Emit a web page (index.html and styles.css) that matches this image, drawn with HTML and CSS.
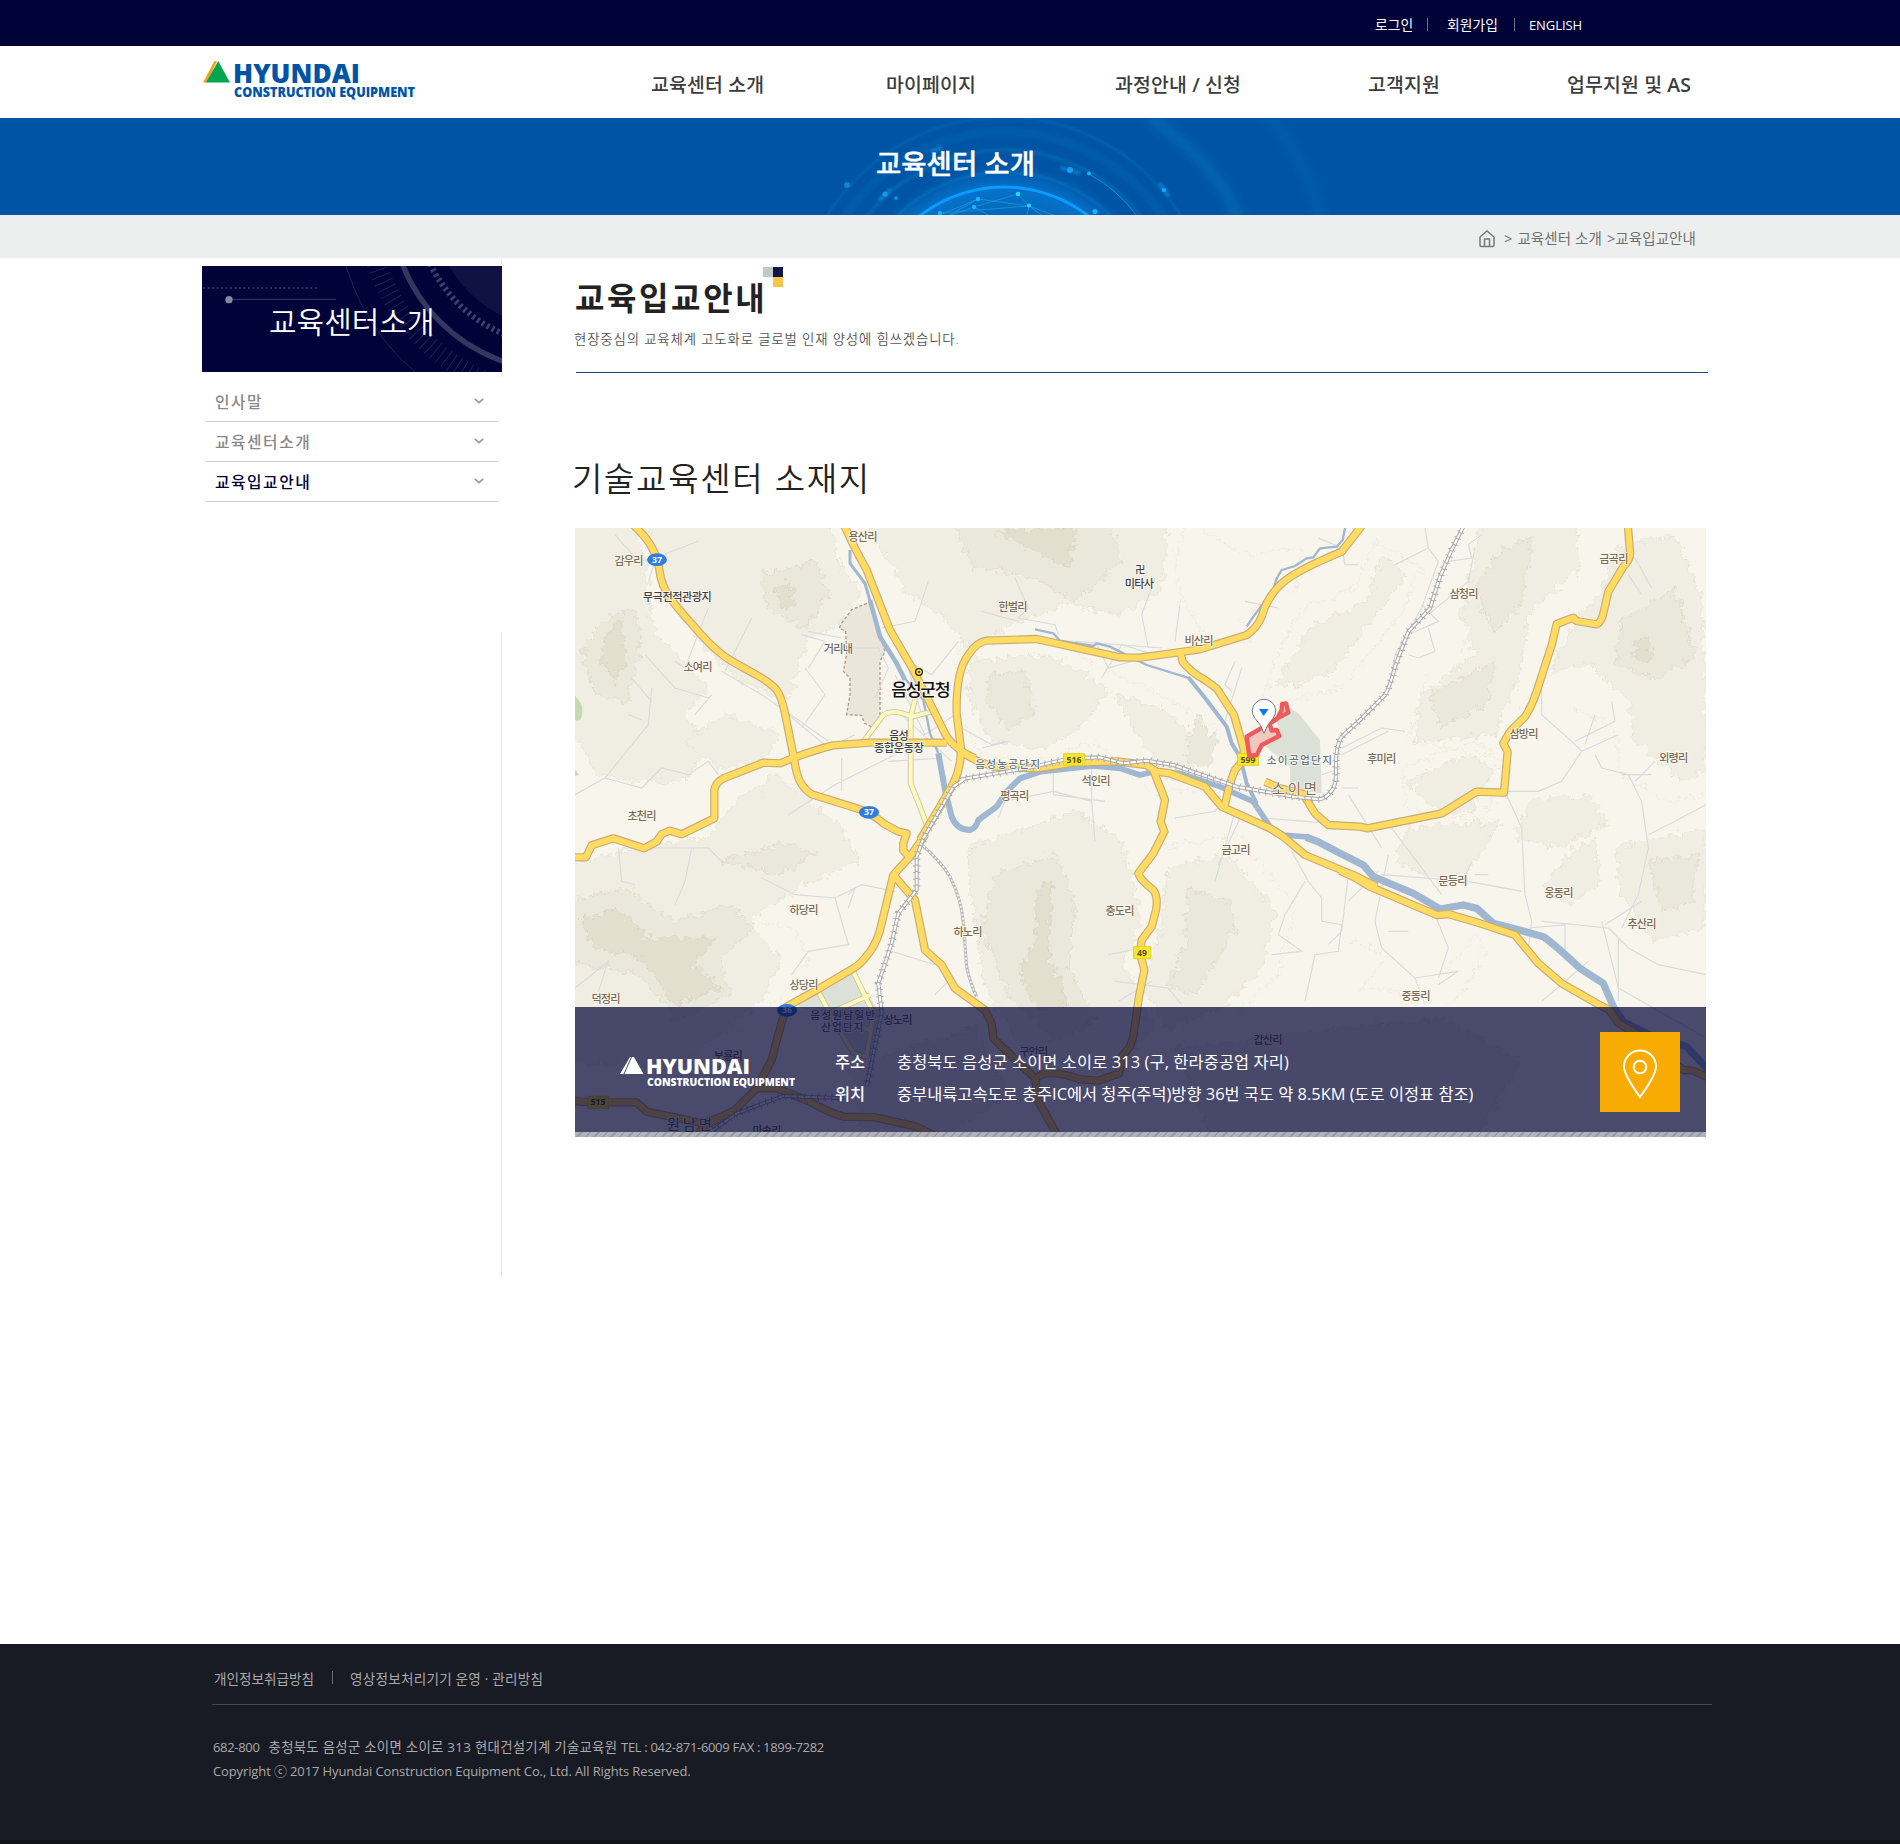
FILE: index.html
```html
<!DOCTYPE html>
<html lang="ko">
<head>
<meta charset="utf-8">
<title>교육입교안내 - 현대건설기계 기술교육센터</title>
<link rel="stylesheet" href="styles.css">
</head>
<body>
<div class="topbar">
  <a>로그인</a><i class="bar"></i><a class="join">회원가입</a><i class="bar"></i><a class="eng">ENGLISH</a>
</div>
<header class="header">
  <svg class="logo" width="214" height="40" viewBox="0 0 214 40">
    <path d="M0 21.500L11.500 0H14L4 21.500z" fill="#f7a11b"/>
    <path d="M3 21.500L15.200 0L27 21.500z" fill="#00a650"/>
    <g class="logo-text" fill="#0054a6">
      <text x="30" y="21.500" font-size="26.500" textLength="127" lengthAdjust="spacingAndGlyphs">HYUNDAI</text>
      <text x="31" y="35.500" font-size="13.300" textLength="181" lengthAdjust="spacingAndGlyphs">CONSTRUCTION EQUIPMENT</text>
    </g>
  </svg>
  <nav class="gnb"><a>교육센터 소개</a><a>마이페이지</a><a>과정안내 <b>/</b> 신청</a><a>고객지원</a><a>업무지원 및 <b>AS</b></a></nav>
</header>
<section class="visual">
  <svg class="visual-art" width="600" height="97" viewBox="750 118 600 97">
    <defs>
      <radialGradient id="globe" gradientUnits="userSpaceOnUse" cx="1004" cy="324" r="160">
        <stop offset=".62" stop-color="#0a84dc" stop-opacity=".35"/><stop offset=".85" stop-color="#0a90ee" stop-opacity=".5"/><stop offset="1" stop-color="#0a84dc" stop-opacity="0"/>
      </radialGradient>
      <filter id="soft"><feGaussianBlur stdDeviation="1"/></filter>
      <filter id="softer" x="-20%" y="-20%" width="140%" height="140%"><feGaussianBlur stdDeviation="4"/></filter>
    </defs>
    <g fill="none" stroke="#0a8fc4">
      <path d="M1150 118Q1220 165 1240 222" stroke-width="12" opacity=".28" filter="url(#softer)"/>
      <path d="M1266 112Q1310 165 1322 222" stroke-width="12" opacity=".12" filter="url(#softer)"/>
      <circle cx="1004" cy="324" r="207" stroke-width="2" opacity=".3" filter="url(#soft)"/>
      <circle cx="1004" cy="324" r="192" stroke-width="9" opacity=".12" filter="url(#soft)"/>
      <circle cx="1004" cy="324" r="174" stroke-width="4" opacity=".25" filter="url(#soft)"/>
      <circle cx="1004" cy="324" r="152" stroke-width="2" opacity=".4" filter="url(#soft)"/>
      <path d="M1089 174Q1118 190 1137 216" stroke="#19a8e6" opacity=".6"/>
    </g>
    <circle cx="1004" cy="324" r="160" fill="url(#globe)"/>
    <circle cx="1004" cy="324" r="137" fill="none" stroke="#0a9cff" stroke-width="3"/>
    <g stroke="#2bb0ea" stroke-width=".8" opacity=".6" fill="none">
      <path d="M940 215L978 199L1029 206L940 213M978 199L948 216L974 207L1018 194L1029 206L1043 216M1029 206L1027 216M1029 206L1056 216M974 207L990 216"/>
    </g>
    <g fill="#14b4ff">
      <circle cx="978" cy="199" r="2.200"/><circle cx="974" cy="207" r="2.200"/><circle cx="940" cy="213" r="2.200"/>
      <circle cx="1018" cy="194" r="2.300" fill="#2ad4f4"/><circle cx="1029" cy="205.500" r="2" fill="#2ad4f4"/>
      <circle cx="1095" cy="211.500" r="2.600"/><circle cx="1070" cy="170" r="3" opacity=".8"/><circle cx="1089" cy="173.500" r="2"/>
      <circle cx="1164" cy="190" r="2"/><circle cx="847" cy="185" r="3" opacity=".5"/><circle cx="885" cy="194" r="2.600" opacity=".7"/><circle cx="896" cy="198" r="2" opacity=".6"/>
    </g>
    <g stroke="#14a4f4" stroke-width="4" stroke-linecap="round" opacity=".4" filter="url(#soft)"><path d="M1062 168L1079 173M1160 184L1168 195M880 199L890 190M932 151L941 148"/></g>
  </svg>
  <h2>교육센터 소개</h2>
</section>
<div class="location">
  <svg width="16" height="18" viewBox="0 0 16 18" fill="none" stroke="#777" stroke-width="1.500"><path d="M1 7L8 1L15 7V15Q15 16.500 13.500 16.500H2.500Q1 16.500 1 15zM5.500 16.500V9H10.500V16.500"/></svg>
  <span class="gt">&gt;</span><span>교육센터 소개</span><span class="gt2">&gt;</span><span class="here">교육입교안내</span>
</div>
<main class="wrap">
  <aside class="side">
    <div class="side-title">
      <svg class="side-art" width="300" height="106" viewBox="36 33 900 318" fill="none">
        <circle cx="1105" cy="-155" r="378" fill="#101244"/>
        <circle cx="1105" cy="-155" r="425" stroke="#3c3f69" stroke-width="18" stroke-dasharray="8 9"/>
        <circle cx="1105" cy="-155" r="502" stroke="#33365f" stroke-width="16"/>
        <circle cx="1105" cy="-155" r="575" stroke="#202350" stroke-width="58" stroke-dasharray="3 17"/>
        <circle cx="1105" cy="-155" r="664" stroke="#1f2250" stroke-width="3"/>
        <path d="M40 99H380" stroke="#42456f" stroke-width="5" stroke-dasharray="5 8.400"/>
        <path d="M117 133H438" stroke="#3a3d68" stroke-width="3"/>
        <circle cx="117" cy="134" r="11" fill="#85869f"/>
      </svg>
      <h3>교육센터소개</h3>
    </div>
    <ul class="lnb">
      <li>인사말<svg width="10" height="6" viewBox="0 0 10 6"><path d="M.8 .8L5 4.600L9.200 .8"/></svg></li>
      <li>교육센터소개<svg width="10" height="6" viewBox="0 0 10 6"><path d="M.8 .8L5 4.600L9.200 .8"/></svg></li>
      <li class="on">교육입교안내<svg width="10" height="6" viewBox="0 0 10 6"><path d="M.8 .8L5 4.600L9.200 .8"/></svg></li>
    </ul>
    <div class="side-line"></div>
  </aside>
  <article class="content">
    <div class="page-head">
      <h1>교육입교안내</h1>
      <svg class="mark" width="20" height="20"><path d="M0 0H10V10H0z" fill="#c2c7ca"/><path d="M10 0H20V10H10z" fill="#111545"/><path d="M10 10H20V20H10z" fill="#fbc54a"/></svg>
    </div>
    <p class="lead">현장중심의 교육체계 고도화로 글로벌 인재 양성에 힘쓰겠습니다.</p>
    <hr>
    <h2 class="sub">기술교육센터 소재지</h2>
    <div class="map">
      <svg class="map-art" width="1131" height="604" viewBox="0 0 3393 1812">
        <defs>
          <filter id="rough" x="-5%" y="-5%" width="110%" height="110%"><feTurbulence type="fractalNoise" baseFrequency=".045" numOctaves="3" seed="4"/><feDisplacementMap in="SourceGraphic" scale="46" xChannelSelector="R" yChannelSelector="G"/></filter>
          <g id="major">
            <g transform="translate(-15 -24)">
              <path d="M185 10C240 60 262 100 270 160S320 260 390 340S500 430 560 465S630 510 645 580L672 715C680 770 690 800 725 823L860 865Q900 875 940 910L985 935L1010 940L1000 970V992L1020 1012"/>
              <path d="M0 1012H48L65 976L130 955L222 985L260 965L275 942L300 932L335 943L433 895V810Q435 790 460 775L580 728L630 730L675 712Q740 688 790 676L900 668H1130"/>
              <path d="M820 10Q850 80 890 150L960 330L1030 450L1070 530L1120 630Q1140 680 1215 715"/>
            </g>
            <g transform="translate(1155 -24)">
              <path d="M-10 680L10 700L50 722L100 740L230 745L340 728L470 724L560 735L590 755L630 760L735 800L785 860L930 925L970 950L1035 1005L1180 1065L1250 1100"/>
              <path d="M-120 960L-60 860L-20 790Q5 740 2 680L-10 580C-12 480 5 430 25 405Q50 365 80 362L230 357L480 412L540 413L720 388L860 345Q890 325 905 290Q920 235 960 195Q1000 155 1145 95L1215 5"/>
              <path d="M660 395L668 425Q690 455 735 480L770 505L822 585L852 690L850 720L825 750L810 790L792 865"/>
              <path d="M580 750L615 840L602 905L613 935L580 1000L535 1060Q540 1080 580 1110Q595 1130 588 1170L575 1220L545 1260L540 1300L553 1350L537 1430L520 1550L510 1580L485 1610L478 1660L415 1682L360 1678L330 1668Q280 1655 250 1662L225 1675"/>
              <path d="M915 785L960 805L1030 822L1065 880L1105 915L1200 920L1222 925L1445 880L1550 815L1632 818L1643 695L1630 670L1650 635L1695 590Q1715 560 1730 515L1775 375L1790 312L1840 293L1850 303L1910 313Q1925 305 1930 280L1945 215L1990 140Q2012 120 2010 95L2003 10"/>
            </g>
            <g transform="translate(-15 936)">
              <path d="M1065 -15L1020 50L970 105L935 250Q925 300 900 335Q870 375 850 385L740 450L650 500Q630 560 605 660L560 745L495 810L400 860L385 885"/>
              <path d="M970 105L1035 180L1065 330L1115 375L1155 445L1245 510L1265 550L1270 595L1395 715L1405 785L1465 890"/>
              <path d="M0 782L60 787H200L230 815L400 850L495 815M560 745H620L720 785Q780 820 820 830L915 832L1040 860L1100 890"/>
            </g>
            <path transform="translate(2295 936)" d="M0 92L40 110L90 140L290 225L325 222L420 250L525 285L595 370L665 430L770 490L808 510L835 550L880 575L1030 690L1060 692L1110 715"/>
          </g>
          <g id="minor">
            <path transform="translate(-15 -24)" d="M880 665L940 585Q970 565 1025 590L1085 575M1035 540L1022 590V790L1050 860L1072 920"/>
            <path transform="translate(-15 936)" d="M745 455L780 520L850 640L890 650L910 520L850 395M800 510L900 465M840 555L905 570"/>
          </g>
          <g id="rail">
            <path transform="translate(1155 -24)" d="M0 780L20 775L200 745L330 715L420 712L490 730L560 722L640 735L830 800L1000 830L1080 838Q1130 820 1128 760Q1125 680 1145 650L1200 600L1275 525Q1290 500 1305 440L1345 335L1410 265L1440 170L1475 90L1515 10"/>
            <path transform="translate(-15 936)" d="M1180 -180L1150 -160L1060 -5L1040 50V150L985 220L965 310L925 430L935 520L890 740M430 870L500 820L640 768L820 775"/>
          </g>
        </defs>
        <rect width="3393" height="1812" fill="#f8f5ec"/>
        <g class="terrain" filter="url(#rough)">
          <g class="t1">
            <path d="M-40 -40H170L210 120L230 300L400 480L330 560L400 660L330 760L180 760L60 740L20 640L-40 620z"/>
            <path d="M200 -40H760L800 130L860 190L780 300L700 330L640 520L500 460L360 330L280 200z"/>
            <path d="M860 -40H1780L1760 180L1640 260L1480 230L1330 280L1180 360L1100 260L1000 200z"/>
            <path d="M450 560L620 620L560 700L430 720L330 640z"/>
            <path d="M1190 400L1420 380L1600 480L1520 600L1400 660L1250 640L1180 500z"/>
            <path d="M1620 500L1760 540L1880 640L1860 740L1780 760L1700 640z"/>
            <path d="M480 820L600 740L800 900L860 1000L700 1060L520 1180L620 1300L560 1420L300 1620L-40 1600V1020L180 960L400 930z"/>
            <path d="M1180 960L1500 850L1640 940L1700 1180L1640 1300L1740 1500L1600 1640L1340 1560L1230 1380L1190 1100z"/>
            <path d="M1780 1020L1960 980L2100 1150L2060 1320L1940 1440L1780 1500L1700 1380L1760 1200z"/>
            <path d="M2200 300L2380 220L2420 80L2490 140L2360 320L2260 440L2100 480z"/>
            <path d="M2720 -40L3000 -40L3010 120L2860 260L2840 420L2760 620L2520 640L2540 500L2700 380L2660 260L2690 120z"/>
            <path d="M3120 60L3300 20L3380 200L3393 720L3320 760L3180 640L3160 520L3040 400L2920 440L3000 280L3080 200z"/>
            <path d="M2500 760L2680 680L2760 720L2680 860L2540 820zM2860 820L3040 800L3100 880L2960 960L2820 930zM2500 900L2780 880L2700 1000L2640 1080L2460 1000z"/>
            <path d="M3120 960L3393 900V1200L3240 1240L3140 1100zM3000 960L3060 940L3080 1060L2980 1130L2900 1080z"/>
            <path d="M820 1620L1200 1500L1300 1700L1100 1830L860 1800zM1800 1560L2600 1470L2840 1600L2700 1830L1900 1810z"/>
          </g>
          <g class="t0">
            <path d="M1840 -20L2000 80L2180 60L2160 180L2000 260L2020 340L1900 330L1820 220L1800 80z"/><path d="M2180 240L2340 180L2400 40L2540 120L2480 260L2300 480L2060 540L2100 400z"/>
            <path d="M1160 340L1440 340L1660 460L1760 500L1920 600L1900 780L1740 800L1560 640L1380 700L1220 680L1140 520z"/><path d="M2480 720L2700 640L2800 720L2720 880L2500 840z"/>
            <path d="M1760 960L1980 920L2160 1130L2110 1340L1960 1480"/><path d="M2720 160L2660 380M2560 440L2500 640L2740 680L2860 520"/><path d="M520 820L640 760L820 920M540 1180L660 1200L700 1300L600 1420L480 1520"/>
            <path d="M2300 1230L2440 1280L2360 1380L2540 1400L2460 1460M2600 1340L2700 1220L2740 1260L2660 1400L2560 1480"/><path d="M3000 540L3120 600L3140 740L3280 820L3393 800"/>
          </g>
          <g class="t2">
            <path d="M80 280L170 240L200 340L160 520L60 500L20 380z"/><path d="M560 140L720 100L760 200L690 300L580 240z"/>
            <path d="M1120 -40L1600 -40L1640 100L1500 220L1380 150L1200 120z"/><path d="M1240 440L1350 430L1380 560L1300 600L1230 520z"/>
            <path d="M2760 80L2880 20L2840 220L2760 320L2700 180z"/><path d="M2560 500L2760 400L2740 520L2600 600z"/><path d="M3140 280L3300 180L3360 380L3240 460L3120 400z"/>
            <path d="M-20 1120L150 1080L300 1180L460 1130L540 1200L430 1290L470 1400L300 1480L200 1340L-20 1300z"/>
            <path d="M1260 1040L1440 980L1500 1120L1480 1320L1560 1480L1440 1540L1300 1400L1220 1200z"/><path d="M1840 1080L1960 1120L1980 1200L1920 1300L1860 1400L1780 1380L1830 1240z"/>
            <path d="M440 1000L640 940L720 980L620 1040z"/><path d="M1860 560L1930 640L1900 720L1830 700z"/><path d="M3220 1000L3370 980L3350 1120L3260 1150z"/>
          </g>
          <g class="t3">
            <path d="M90 320L140 270L150 400L120 460L80 400z"/><path d="M1260 10L1500 0L1480 120L1380 70z"/><path d="M20 1180L120 1140L220 1230L420 1230L350 1310L440 1380L300 1430L200 1290L60 1260z"/>
            <path d="M1390 1080L1430 1060L1420 1280L1480 1420L1400 1450L1330 1340L1380 1240z"/><path d="M3180 340L3220 320L3230 400L3180 400z"/><path d="M600 180L640 160L660 230L620 240z"/>
          </g>
        </g>
        <g fill="#c5dab0"><path d="M0 505Q25 525 22 555T0 575zM0 725L12 740L0 745z"/></g>
        <path class="zone" d="M800 285L830 245L885 222L900 280L930 370L915 400V560L895 600L868 585L860 562L815 560L825 500L825 450L805 430L815 380L812 310L793 300z"/>
        <g fill="#dbe1d6"><path transform="translate(1155 -24)" d="M985 560L1015 580L1080 660L1085 820L990 810V740L905 670L960 640L950 600z"/><path transform="translate(-15 936)" d="M680 490L850 395L930 520L900 650L845 640L780 520L690 505z"/></g>
        <g class="lanes">
          <path d="M120 20L190 100L240 90L370 40M240 100L220 160M210 380L300 480L400 510M300 400L330 420L400 240M450 430L530 270M440 430L560 500L690 590L760 640M360 560L410 500M0 800L90 750L220 590L230 480M170 450L230 520M200 575L160 560M90 750L200 780L260 720L340 740L400 700L430 740M640 560L760 660L840 620M700 420L750 340L680 320M690 420L750 500L680 600M800 330L700 310M830 360H910L940 420L900 510M920 300L1020 280L1060 160M1000 400L1070 440L1150 340M960 440L1050 620L1140 560M980 560L1130 700M960 680L780 770L640 860M800 690V790M940 700L1100 690M1000 420L1040 560"/>
          <path d="M130 960L140 1060L180 1070M350 960L330 1060L300 1130M140 960L400 960L440 1000M560 1050L660 1100L780 1110L860 1070L960 1090M780 1110L820 1250L700 1270L650 1340M820 1100L840 1080L820 1140M950 1270L1080 1310M0 1380L100 1300L70 1390M1120 1360L1080 1400"/>
          <path d="M1320 150L1360 240L1330 270L1440 290L1450 320M1330 280L1220 250M1740 150L1700 260L1720 360M1815 230L1800 340M1580 450L1640 350L1740 380L1600 420L1560 340M1500 340L1760 360M1980 400L1950 470L1970 490M2000 420L1950 580M2010 220L2110 240M2230 30L2300 60L2310 110H2350M1160 600L1250 650L1300 640L1220 660M1435 730V800L1590 820M1550 720V820L1560 940M1270 870L1290 820L1435 790L1550 820M1800 870L1920 850L1970 790M1980 850L1920 1060M2000 860L1930 1010M2060 870L2450 900L2600 1100M2300 780H2350M2240 740L2300 720"/>
          <path d="M2550 0L2560 60L2460 110M2560 60L2590 100L2540 240L2460 380L2450 440M2720 20L2680 50L2690 90L2620 100M2700 60L2680 160L2560 260M2540 230L2590 280L2500 320M2560 300L2580 370L2530 390L2500 380M2300 660L2420 600L2490 610M2300 680L2440 610M2320 800L2420 960M2900 450L2900 560L2990 640L3020 670L2960 760L2890 790H2790L2840 900L2850 1100L2870 1180L2860 1260M3020 670L3130 620M3030 650L3060 560M3000 640L3120 580L3110 520M3060 680L3080 720L3160 740L3200 820L3220 960L3190 1100L3140 1200M3140 740L3230 740M3180 760L3240 700M3220 920L3300 880L3393 830M3160 140L3200 200M3180 90L3230 180"/>
          <path d="M2150 970L2200 1060L2240 1110V1180L2300 1190L2290 1270L2220 1280L2190 1420M2190 1060L2130 1160L2110 1220L2180 1270L2090 1280M2320 1040L2300 1210L2260 1250M2440 980L2400 1180L2420 1260L2520 1350L2550 1430M2440 1210H2500M2410 1030L2320 1120M2420 1040L2680 1060L2840 1090M2690 1000L2660 1070M2740 1040H2700M2860 1200L2970 1190V1300M2900 1180L3100 1200L3160 1260L3250 1310L3393 1340M3080 1180L3130 1380L3393 1530M3130 1230V1420M3090 1190L3200 1120M2900 1420L3040 1300M2580 1160L2620 1260L2590 1350M2520 1350L2650 1330L2590 1370M1620 1360L1780 1380L1820 1430M1700 1260L1600 1280M1630 1420L1730 1360"/>
        </g>
        <g class="river">
          <path transform="translate(-15 -24)" stroke-width="9" d="M840 90V130L885 190L905 260"/>
          <path transform="translate(-15 -24)" stroke-width="14" d="M900 240L930 350L980 430L1005 480"/><path transform="translate(-15 -24)" stroke-width="7" d="M1000 470L1060 540L1080 640L1105 700"/>
          <path transform="translate(-15 -24)" stroke-width="18" d="M1105 700L1125 810L1145 890Q1160 930 1200 930Q1218 925 1225 900L1280 860L1310 815L1350 775L1410 755"/>
          <path transform="translate(1155 -24)" stroke-width="17" d="M235 756L400 738L480 745L540 765L580 755L660 760L780 800L880 845L930 920L970 945L1044 951"/>
          <path transform="translate(1155 -24)" stroke-width="7" d="M225 328L280 340L300 362L400 378L410 370L450 380L560 435L690 475"/><path transform="translate(1155 -24)" stroke-width="12" d="M685 472L740 540L800 620L815 670L840 710L860 790L890 850"/>
          <path transform="translate(1155 -24)" stroke-width="7" d="M860 320L880 290L895 270L940 210L950 175L965 150L1005 138L1040 115L1060 112L1080 85L1130 80L1148 60L1158 10"/>
          <path transform="translate(2295 936)" stroke-width="22" d="M-102 -9L-60 8L0 40L70 75L100 110L220 160L300 207L370 195L410 205L460 250L530 268L610 290Q640 310 720 385L790 430L820 500L850 545L930 585L1040 620L1110 695"/>
        </g>
        <use href="#minor" class="road minor-case"/><use href="#minor" class="road minor-fill"/>
        <use href="#major" class="road case"/><use href="#major" class="road fill"/>
        <use href="#rail" class="road rail-ties"/><use href="#rail" class="road rail-case"/><use href="#rail" class="road rail-fill"/>
        <g transform="translate(-15 936)" fill="none"><path stroke="#b4b4b4" stroke-width="9" d="M1050 10Q1110 60 1140 110Q1175 180 1180 250L1190 380Q1200 430 1220 470"/><path stroke="#f4f2ea" stroke-width="5" stroke-dasharray="7 5" d="M1050 10Q1110 60 1140 110Q1175 180 1180 250L1190 380Q1200 430 1220 470"/></g>
        <g class="labels">
          <g transform="translate(-15 -24)">
            <text x="177" y="134" textLength="87">감우리</text><text x="879" y="62" textLength="87">용산리</text><text class="poi" x="322" y="243" textLength="206">무극전적관광지</text><text class="plain" x="805" y="399" textLength="88">거리내</text><text x="384" y="453" textLength="87">소여리</text>
            <text class="city" x="1053" y="529" textLength="178">음성군청</text><text class="poi" x="987" y="659" textLength="58">음성</text><text class="poi" x="987" y="696" textLength="150">종합운동장</text><text x="216" y="899" textLength="87">초천리</text>
            <circle cx="1047" cy="456" r="10" fill="#f7e52c" stroke="#222" stroke-width="4"/><circle cx="1047" cy="456" r="3" fill="#222"/>
          </g>
          <g transform="translate(1155 -24)">
            <text class="poi temple" x="541" y="159">卍</text><text class="poi" x="538" y="203" textLength="88">미타사</text><text x="159" y="273" textLength="87">한벌리</text><text x="717" y="375" textLength="87">비산리</text><text class="ind" x="143" y="744" textLength="195">음성농공단지</text>
            <text x="408" y="794" textLength="87">석인리</text><text x="164" y="840" textLength="87">평곡리</text><text class="town" x="1003" y="823" textLength="136">소이면</text><text x="828" y="1002" textLength="87">금고리</text>
            <text class="ind" x="1018" y="732" textLength="196">소이공업단지</text>
          </g>
          <g transform="translate(2295 -24)"><text x="822" y="129" textLength="87">금곡리</text><text x="372" y="234" textLength="87">삼청리</text><text x="552" y="653" textLength="87">삼방리</text><text x="125" y="729" textLength="87">후미리</text><text x="1001" y="725" textLength="87">외령리</text></g>
          <g transform="translate(-15 936)"><text x="702" y="222" textLength="87">하당리</text><text x="702" y="447" textLength="87">상당리</text><text x="108" y="489" textLength="87">덕정리</text><text class="ind" x="818" y="538" textLength="195">음성원남일반</text><text class="ind" x="817" y="573" textLength="126">산업단지</text><text x="984" y="553" textLength="87">상노리</text><text x="475" y="659" textLength="87">보룡리</text><text class="town" x="358" y="871" textLength="136">원남면</text><text x="591" y="886" textLength="87">마솔리</text></g>
          <g transform="translate(1155 936)"><text x="24" y="288" textLength="87">하노리</text><text x="480" y="225" textLength="87">충도리</text><text x="221" y="647" textLength="87">구안리</text><text x="924" y="613" textLength="87">갑산리</text></g>
          <g transform="translate(2295 936)"><text x="339" y="135" textLength="87">문등리</text><text x="657" y="171" textLength="87">웅동리</text><text x="906" y="264" textLength="87">추산리</text><text x="228" y="480" textLength="87">중동리</text></g>
        </g>
        <g class="shields">
          <g fill="#2f7de1"><ellipse cx="246" cy="95" rx="30" ry="19"/><ellipse cx="882" cy="853" rx="30" ry="19"/><ellipse cx="636" cy="1447" rx="30" ry="19"/></g>
          <g fill="#fff"><text x="246" y="104">37</text><text x="882" y="862">37</text><text x="636" y="1456">36</text></g>
          <g fill="#fae62d" stroke="#e3cf28" stroke-width="3"><path d="M1466 677H1528V712H1466zM1988 677H2050V712H1988zM1676 1256H1727V1292H1676zM38 1705H100V1742H38z"/></g>
          <g fill="#55502a"><text x="1497" y="704">516</text><text x="2019" y="704">599</text><text x="1701" y="1283">49</text><text x="69" y="1732">515</text></g>
        </g>
        <g transform="translate(1155 -24)">
          <path d="M860 650L912 620L950 598L965 570L966 552L978 550L985 578L928 608L935 632L950 630L958 648L905 675L890 705L868 708z" fill="#e05050" fill-opacity=".28" stroke="#ef5b5b" stroke-width="13" stroke-linejoin="round"/>
          <path d="M912 640Q905 615 885 595A35 35 0 1 1 939 595Q920 615 912 640z" fill="#fff" stroke="#777c84" stroke-width="3"/>
          <path d="M897 567H926L911 588z" fill="#0a78f5"/>
        </g>
      </svg>
      <div class="map-bar">
        <svg class="logo-w" width="176" height="32" viewBox="0 0 176 32" fill="#fff">
          <path d="M0 18L10 1H11L3.500 18zM4.500 18L12 1H14L23.500 18z"/>
          <g class="logo-text"><text x="26" y="18" font-size="21.500" textLength="104" lengthAdjust="spacingAndGlyphs">HYUNDAI</text><text x="27" y="29.500" font-size="11" textLength="148" lengthAdjust="spacingAndGlyphs">CONSTRUCTION EQUIPMENT</text></g>
        </svg>
        <dl>
          <dt>주소</dt><dd class="addr">충청북도 음성군 소이면 소이로 313 (구, 한라중공업 자리)</dd>
          <dt>위치</dt><dd class="way">중부내륙고속도로 충주IC에서 청주(주덕)방향 36번 국도 약 8.5KM (도로 이정표 참조)</dd>
        </dl>
        <a class="pin"><svg width="36" height="50" viewBox="0 0 36 50" fill="none" stroke="#fff" stroke-width="2"><path d="M18 48Q2 26 2 17.500A16 16 0 0 1 34 17.500Q34 26 18 48z"/><circle cx="18" cy="18" r="6.300"/></svg></a>
      </div>
      <div class="hatch"></div>
    </div>
  </article>
</main>
<footer class="footer">
  <div class="foot-in">
    <div class="policy"><a>개인정보취급방침</a><i class="bar"></i><a class="cctv">영상정보처리기기 운영 · 관리방침</a></div>
    <address><span class="zip">682-800</span><span class="faddr">충청북도 음성군 소이면 소이로 313 현대건설기계 기술교육원 <span class="tel">TEL : 042-871-6009 FAX : 1899-7282</span></span></address>
    <p class="copy">Copyright ⓒ 2017 Hyundai Construction Equipment Co., Ltd. All Rights Reserved.</p>
  </div>
</footer>
</body>
</html>
```
FILE: styles.css
```css
* { box-sizing: border-box; margin: 0; padding: 0; }
body { width: 1900px; height: 1844px; display: flex; flex-direction: column; background: #fff; color: #222; font-family: "Open Sans", "Noto Sans CJK KR", sans-serif; white-space: nowrap; overflow: hidden; }
svg { display: block; flex: none; }
ul { list-style: none; }

.topbar { height: 46px; flex: none; padding: 3px 0 0 1375px; display: flex; align-items: center; background: #000238; color: #fff; font-size: 13.8px; line-height: 20px; }
.bar { width: 1px; height: 13px; background: #6d6e85; }
.topbar .bar { margin: 0 19px 0 14px; }
.topbar .join + .bar { margin: 0 14px 0 16px; }
.topbar .eng { font-size: 13px; letter-spacing: -.05px; }

.header { height: 72px; flex: none; display: flex; }
.logo { margin: 15px 0 0 203px; overflow: visible; }
.logo-w { overflow: visible; }
.logo-text { font-family: "Open Sans", sans-serif; font-weight: 800; }
.gnb { margin: 27px 0 0 234px; display: grid; grid-template-columns: 235px 229px 253px 199px auto; font-size: 19.4px; letter-spacing: .15px; font-weight: 500; line-height: 24px; color: #3c3c3c; }
.gnb b { font-weight: 600; }

.visual { position: relative; height: 97px; flex: none; background: #0054a6; padding: 28px 0 0 876px; }
.visual-art { position: absolute; left: 750px; top: 0; }
.visual h2 { position: relative; font-size: 27.5px; line-height: 36px; font-weight: 500; color: #fff; -webkit-text-stroke: .4px #fff; }

.location { height: 43px; flex: none; display: flex; align-items: center; padding: 4px 0 0 1479px; background: #edefee; color: #707070; font-size: 14.5px; letter-spacing: .1px; line-height: 20px; }
.location .gt { margin: 0 5px 0 9px; }
.location .gt2 { margin-left: 5px; }

.wrap { flex: 1; display: flex; padding-left: 202px; }
.side { width: 300px; padding-top: 8px; border: 0; background: linear-gradient(#e9e9e9, #e9e9e9) 299px 0 / 1px 119px no-repeat; }
.side-title { position: relative; height: 106px; background: #000238; }
.side-art { position: absolute; left: 0; top: 0; }
.side-title h3 { position: relative; padding: 36px 0 0 67px; font-size: 30px; line-height: 40px; font-weight: 350; color: #fff; }
.lnb { margin: 10px 4px 0; }
.lnb li { height: 40px; display: flex; justify-content: space-between; padding: 10px 14px 0 9px; border-bottom: 1px solid #cfcfcf; font-size: 15.8px; letter-spacing: 1.5px; line-height: 20px; font-weight: 500; color: #888; }
.lnb svg { margin-top: 6px; fill: none; stroke: #999; stroke-width: 1.6; }
.lnb .on { color: #000238; }
.side-line { width: 1px; height: 645px; margin: 130px 0 0 299px; background: #e9e9e9; }

.content { width: 1133px; margin-left: 73px; }
.page-head { display: flex; height: 63px; padding-top: 9px; }
.page-head h1 { width: 188px; padding-top: 10px; font-size: 32px; line-height: 42px; letter-spacing: 2.6px; font-weight: 700; }
.lead { height: 51px; padding-top: 8px; margin-left: -1px; font-size: 13.4px; letter-spacing: .85px; line-height: 20px; font-weight: 350; color: #555; }
hr { height: 1px; margin-left: 1px; border: 0; background: #27407c; }
.sub { height: 155px; padding-top: 80px; margin-left: -3px; font-size: 33px; line-height: 52px; letter-spacing: 1.7px; font-weight: 350; }

.map { width: 1131px; height: 609px; display: flex; flex-direction: column; position: relative; }
.terrain path { stroke-width: 3; }
.t0 { fill: none; stroke: #eeeadd; }
.t1 { fill: #f0eee3; stroke: #e7e3d5; }
.t2 { fill: #eae7db; stroke: #e0dccd; }
.t3 { fill: #e2dfcf; stroke: #d9d6c5; }
.zone { fill: #ece5da; stroke: #a89f90; stroke-width: 4; stroke-dasharray: 9 6; }
.lanes { fill: none; stroke: #d8dadb; stroke-width: 3.4; }
.river { fill: none; stroke: #9fb7d0; stroke-linejoin: round; }
.road { fill: none; stroke-linejoin: round; }
.case { stroke: #c9ac74; stroke-width: 25; }
.fill { stroke: #ffdb62; stroke-width: 18; }
.minor-case { stroke: #c8c5b4; stroke-width: 17; }
.minor-fill { stroke: #fffab8; stroke-width: 12; }
.rail-ties { stroke: #aaa; stroke-width: 22; stroke-dasharray: 3 17; }
.rail-case { stroke: #aaa; stroke-width: 12; }
.rail-fill { stroke: #fff; stroke-width: 6; stroke-dasharray: 17 3; }
.labels text { font-size: 33.5px; font-weight: 500; fill: #7d6c55; stroke: #fbf9f3; stroke-width: 5; stroke-linejoin: round; paint-order: stroke; text-anchor: middle; }
.labels .poi { fill: #3f3f3f; }
.labels .temple { font-size: 30px; }
.labels .plain { fill: #6c6c6c; }
.labels .ind { font-size: 32px; fill: #637679; }
.labels .town { font-size: 43px; font-weight: 400; }
.labels .city { font-size: 52px; fill: #111; }
.shields text { font-size: 26px; font-weight: 700; text-anchor: middle; stroke: none; }
.map-bar { position: absolute; left: 0; top: 479px; width: 1131px; height: 125px; display: flex; background: rgba(0, 2, 56, .7); color: #fff; }
.logo-w { margin: 49px 0 0 45px; }
.map-bar dl { width: 765px; margin: 39px 0 0 39px; display: grid; grid-template-columns: 62px auto; grid-auto-rows: 32px; align-content: start; font-size: 16.4px; line-height: 32px; }
.map-bar dt { font-weight: 500; }
.map-bar .addr { letter-spacing: .1px; }
.pin { width: 80px; height: 80px; margin-top: 25px; padding-top: 4px; display: flex; align-items: center; justify-content: center; background: #f8ab00; }
.hatch { height: 5px; background: repeating-linear-gradient(135deg, #b2b2bc 0 4px, #9c9ca6 4px 6px); }

.footer { height: 200px; flex: none; background: #191b24; border-bottom: 4px solid #12141c; color: #a9a9ab; font-size: 13.4px; }
.foot-in { width: 1500px; margin-left: 212px; }
.policy { height: 61px; display: flex; align-items: center; padding: 7px 0 0 2px; border-bottom: 1px solid #44464e; font-size: 13.6px; }
.policy .bar { margin: 0 17px 0 18px; background: #6b6c72; }
.policy .cctv { letter-spacing: .22px; }
address { margin-top: 31px; display: flex; gap: 9px; padding-left: 1px; font-style: normal; line-height: 22px; }
.zip, .tel { font-size: 13px; letter-spacing: -.32px; }
.faddr { letter-spacing: .28px; }
.copy { margin-top: 2px; padding-left: 1px; line-height: 22px; font-size: 13px; letter-spacing: -.12px; }
```
